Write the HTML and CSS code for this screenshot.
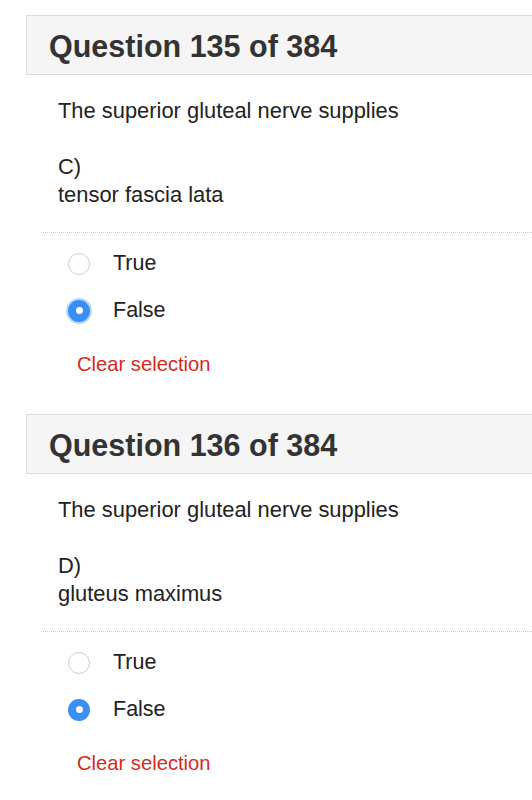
FILE: index.html
```html
<!DOCTYPE html>
<html>
<head>
<meta charset="utf-8">
<link rel="stylesheet" href="styles.css">
</head>
<body>
<div class="page">
  <section class="question">
    <div class="qhead"><h2>Question 135 of 384</h2></div>
    <div class="qtext">The superior gluteal nerve supplies<br><br>C)<br>tensor fascia lata</div>
    <div class="answers">
      <div class="option"><span class="radio"></span><span class="label">True</span></div>
      <div class="option"><span class="radio checked focus"></span><span class="label">False</span></div>
      <div class="clear">Clear selection</div>
    </div>
  </section>
  <section class="question">
    <div class="qhead"><h2>Question 136 of 384</h2></div>
    <div class="qtext">The superior gluteal nerve supplies<br><br>D)<br>gluteus maximus</div>
    <div class="answers">
      <div class="option"><span class="radio"></span><span class="label">True</span></div>
      <div class="option"><span class="radio checked"></span><span class="label">False</span></div>
      <div class="clear">Clear selection</div>
    </div>
  </section>
</div>
</body>
</html>
```
FILE: styles.css
```css
html, body {
  margin: 0;
  padding: 0;
  background: #fff;
  overflow: hidden;
}
body {
  font-family: "Liberation Sans", Arial, Helvetica, sans-serif;
  color: #222;
}
.page {
  padding: 15px 0 0 26px;
}
.question {
  margin-bottom: 36px;
}
.qhead {
  height: 58px;
  background: #f5f5f5;
  border: 1px solid #dcdcdc;
  border-right: none;
  display: flex;
  align-items: center;
  padding-left: 22px;
}
.qhead h2 {
  margin: 0;
  font-size: 30.5px;
  font-weight: bold;
  color: #333;
  line-height: 1;
  position: relative;
  top: 1px;
}
.qtext {
  margin-top: 22px;
  padding-left: 32px;
  font-size: 21.9px;
  line-height: 28px;
  color: #222;
}
.answers {
  margin: 23px 0 0 15px;
  border-top: 1px dotted #c8c8c8;
  padding-top: 7px;
}
.option {
  display: flex;
  align-items: center;
  height: 47px;
  padding-left: 27px;
}
.radio {
  width: 22px;
  height: 22px;
  box-sizing: border-box;
  border-radius: 50%;
  border: 1.5px solid #cfcfcf;
  background: #fff;
  margin-right: 23px;
  flex: none;
  position: relative;
}
.radio.checked {
  border: none;
  background: #3a8ef5;
}
.radio.checked::after {
  content: "";
  position: absolute;
  left: 50%;
  top: 50%;
  width: 7px;
  height: 7px;
  margin: -3.5px 0 0 -3.5px;
  border-radius: 50%;
  background: #fff;
}
.radio.focus {
  box-shadow: 0 0 0 2px rgba(58, 142, 245, 0.35);
}
.label {
  font-size: 21.5px;
  color: #222;
}
.clear {
  margin-top: 16px;
  padding-left: 36px;
  font-size: 20.2px;
  line-height: 28px;
  color: #d8291b;
}
```
